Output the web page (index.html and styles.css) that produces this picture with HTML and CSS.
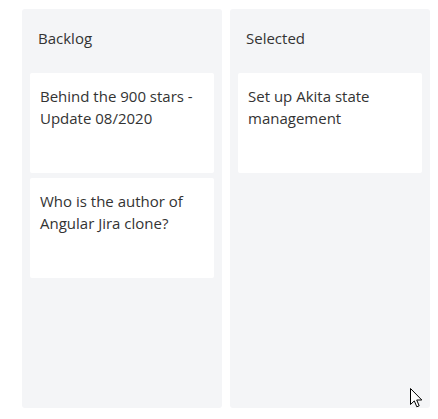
FILE: index.html
```html
<!DOCTYPE html>
<html>
  <head>
    <title>Board</title>
    <link rel="stylesheet" href="styles.css">
  </head>
  <body>
    <div class="board">
      <div class="lane">
        <div class="lane-title">Backlog</div>
        <div class="lane-cards">
          <div class="card">Behind the 900 stars - Update 08/2020</div>
          <div class="card">Who is the author of Angular Jira clone?</div>
        </div>
      </div>
      <div class="lane">
        <div class="lane-title">Selected</div>
        <div class="lane-cards">
          <div class="card">Set up Akita state management</div>
        </div>
      </div>
    </div>
    <svg class="pointer" width="13" height="21" viewBox="0 0 13 21">
      <path d="M0.5 0.5 L0.5 16.5 L4.3 12.9 L6.8 18.8 L9.2 17.8 L6.7 12 L11.8 12 Z" fill="#fff" stroke="#000" stroke-width="1" stroke-linejoin="round" />
    </svg>
  </body>
</html>
```

FILE: styles.css
```css
body {
  margin: 0;
  font-family: "Open Sans", "Noto Sans", sans-serif;
  color: #333;
  background-color: #fff;
}

.board {
  display: flex;
  gap: 8px;
  padding: 9px 0 0 22px;
}

.lane {
  width: 200px;
  height: 399px;
  background-color: #f4f5f7;
  border-radius: 3px;
}

.lane-title {
  padding: 19px 16px 25px;
  font-size: 15px;
  line-height: 20px;
}

.lane-cards {
  display: flex;
  flex-direction: column;
  gap: 5px;
  padding: 0 8px;
}

.card {
  box-sizing: border-box;
  height: 100px;
  padding: 12px 10px;
  background-color: #fff;
  border-radius: 2px;
  font-size: 15px;
  line-height: 22px;
}

.pointer {
  position: absolute;
  left: 410px;
  top: 388px;
}
```
